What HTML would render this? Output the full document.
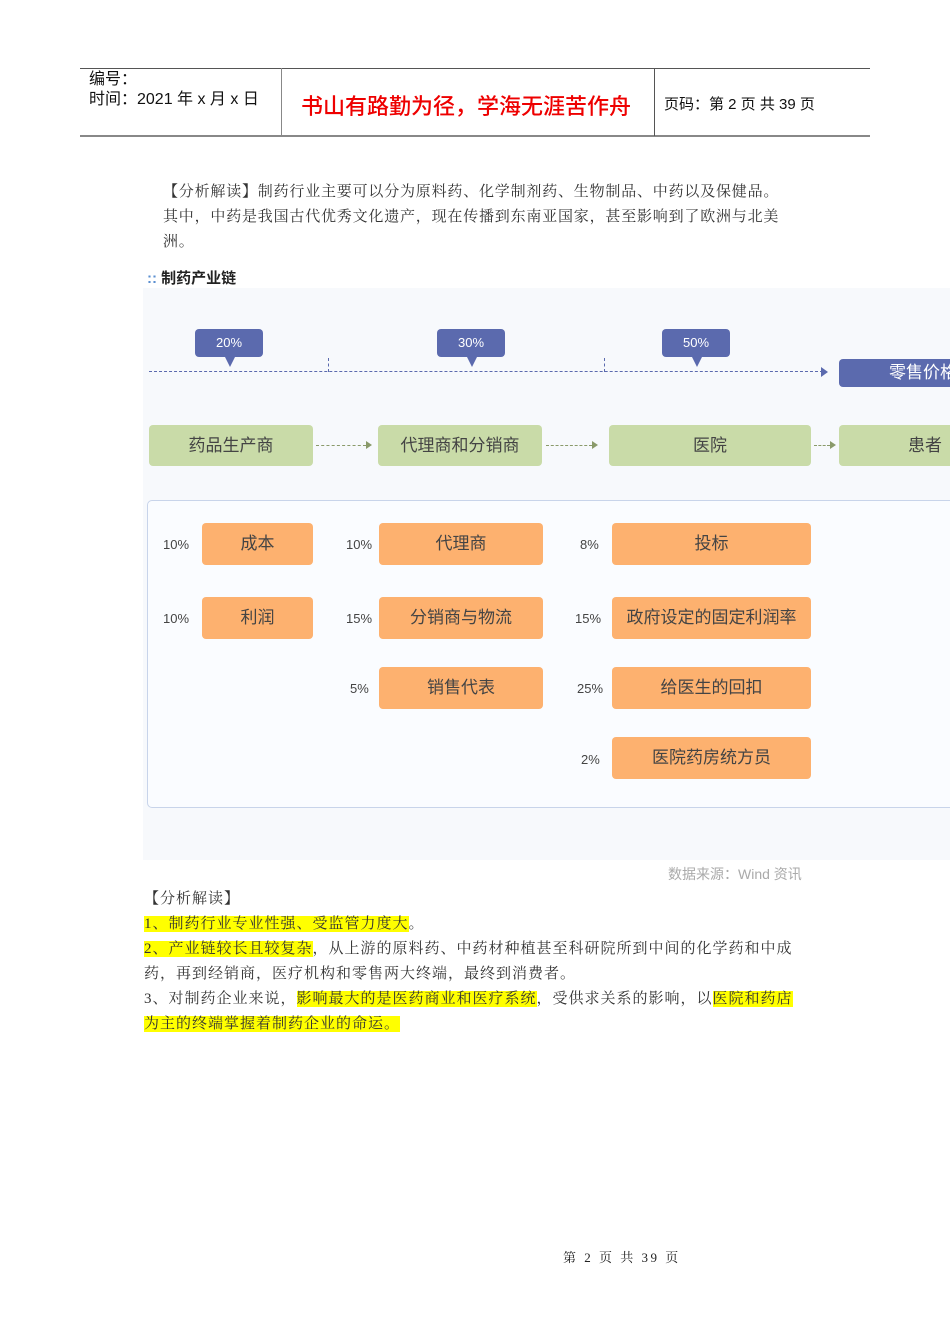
<!DOCTYPE html>
<html><head><meta charset="utf-8"><style>
body{margin:0;width:950px;height:1344px;background:#fff;position:relative;overflow:hidden;font-family:"Liberation Sans","Noto Sans CJK SC",sans-serif}
.a{position:absolute}
.hl{background:#ffff00}
.ser{font-family:"Liberation Serif","Noto Serif CJK SC",serif;font-size:15px;color:#333;white-space:nowrap}
.g{position:absolute;background:#c9dba8;border-radius:4px;height:41px;line-height:41px;text-align:center;font-size:17px;color:#444;top:425px}
.o{position:absolute;background:#fdb16f;border-radius:4px;height:42px;line-height:42px;text-align:center;font-size:17px;color:#444}
.p{position:absolute;font-size:13px;color:#444}
.b{position:absolute;background:#5b6aae;color:#fff;font-size:13px;text-align:center;border-radius:4px;width:68px;height:28px;line-height:28px;top:329px}
.b:after{content:"";position:absolute;left:30px;top:28px;border-left:5px solid transparent;border-right:5px solid transparent;border-top:10px solid #5b6aae}
</style></head><body>
<div class="a" style="left:80px;top:68px;width:790px;border-top:1px solid #555"></div>
<div class="a" style="left:80px;top:135px;width:790px;border-top:2px solid #888"></div>
<div class="a" style="left:281px;top:68px;height:68px;border-left:1px solid #888"></div>
<div class="a" style="left:654px;top:68px;height:68px;border-left:1px solid #555"></div>
<div class="a" style="left:89px;top:70px;font-size:16px;line-height:20px;color:#111">编号：<br>时间：2021 年 x 月 x 日</div>
<div class="a" style="left:301px;top:89px;font-size:22px;color:#e00;font-weight:500;font-family:'Noto Sans CJK SC',sans-serif">书山有路勤为径，学海无涯苦作舟</div>
<div class="a" style="left:664px;top:93px;font-size:15px;color:#111">页码：第 2 页  共 39 页</div>

<div class="a ser" style="left:163px;top:180px;line-height:25px;letter-spacing:0.8px">【分析解读】制药行业主要可以分为原料药、化学制剂药、生物制品、中药以及保健品。<br>其中，中药是我国古代优秀文化遗产，现在传播到东南亚国家，甚至影响到了欧洲与北美<br>洲。</div>
<div class="a" style="left:147px;top:267px;font-size:15px;font-weight:bold;color:#222"><span style="color:#5b8fd0">::</span> 制药产业链</div>

<div class="a" style="left:143px;top:288px;width:807px;height:572px;background:#f7f9fc"></div>
<div class="b" style="left:195px">20%</div>
<div class="b" style="left:437px">30%</div>
<div class="b" style="left:662px">50%</div>
<div class="a" style="left:149px;top:371px;width:674px;border-top:1px dashed #5b6aae"></div>
<div class="a" style="left:821px;top:367px;border-top:5px solid transparent;border-bottom:5px solid transparent;border-left:7px solid #5b6aae"></div>
<div class="a" style="left:328px;top:358px;height:14px;border-left:1px dashed #5b6aae"></div>
<div class="a" style="left:604px;top:358px;height:14px;border-left:1px dashed #5b6aae"></div>
<div class="a" style="left:839px;top:359px;width:120px;height:28px;line-height:28px;background:#5b6aae;border-radius:4px;color:#fff;font-size:17px;padding-left:50px;box-sizing:border-box">零售价格</div>

<div class="g" style="left:149px;width:164px">药品生产商</div>
<div class="g" style="left:378px;width:164px">代理商和分销商</div>
<div class="g" style="left:609px;width:202px">医院</div>
<div class="g" style="left:839px;width:120px;text-align:left;padding-left:69px;box-sizing:border-box">患者</div>
<div class="a" style="left:316px;top:445px;width:50px;border-top:1px dashed #8a9a6a"></div>
<div class="a" style="left:546px;top:445px;width:46px;border-top:1px dashed #8a9a6a"></div>
<div class="a" style="left:814px;top:445px;width:16px;border-top:1px dashed #8a9a6a"></div>
<div class="a" style="left:366px;top:441px;border-top:4px solid transparent;border-bottom:4px solid transparent;border-left:6px solid #8a9a6a"></div>
<div class="a" style="left:592px;top:441px;border-top:4px solid transparent;border-bottom:4px solid transparent;border-left:6px solid #8a9a6a"></div>
<div class="a" style="left:830px;top:441px;border-top:4px solid transparent;border-bottom:4px solid transparent;border-left:6px solid #8a9a6a"></div>

<div class="a" style="left:147px;top:500px;width:820px;height:306px;border:1px solid #c8d4ea;border-radius:5px;background:#fafcff"></div>
<div class="p" style="left:163px;top:537px">10%</div><div class="o" style="left:202px;top:523px;width:111px">成本</div>
<div class="p" style="left:163px;top:611px">10%</div><div class="o" style="left:202px;top:597px;width:111px">利润</div>
<div class="p" style="left:346px;top:537px">10%</div><div class="o" style="left:379px;top:523px;width:164px">代理商</div>
<div class="p" style="left:346px;top:611px">15%</div><div class="o" style="left:379px;top:597px;width:164px">分销商与物流</div>
<div class="p" style="left:350px;top:681px">5%</div><div class="o" style="left:379px;top:667px;width:164px">销售代表</div>
<div class="p" style="left:580px;top:537px">8%</div><div class="o" style="left:612px;top:523px;width:199px">投标</div>
<div class="p" style="left:575px;top:611px">15%</div><div class="o" style="left:612px;top:597px;width:199px">政府设定的固定利润率</div>
<div class="p" style="left:577px;top:681px">25%</div><div class="o" style="left:612px;top:667px;width:199px">给医生的回扣</div>
<div class="p" style="left:581px;top:752px">2%</div><div class="o" style="left:612px;top:737px;width:199px">医院药房统方员</div>

<div class="a" style="left:668px;top:864px;font-size:14px;color:#aaa">数据来源：Wind 资讯</div>
<div class="a ser" style="left:144px;top:887px;line-height:25px;letter-spacing:1px">【分析解读】<br><span class="hl">1、制药行业专业性强、受监管力度大</span>。<br><span class="hl">2、产业链较长且较复杂</span>，从上游的原料药、中药材种植甚至科研院所到中间的化学药和中成<br>药，再到经销商，医疗机构和零售两大终端，最终到消费者。<br>3、对制药企业来说，<span class="hl">影响最大的是医药商业和医疗系统</span>，受供求关系的影响，以<span class="hl">医院和药店</span><br><span class="hl">为主的终端掌握着制药企业的命运。</span></div>

<div class="a ser" style="left:563px;top:1247px;font-size:13px;color:#222;letter-spacing:2.5px">第 2 页 共 39 页</div>
</body></html>
